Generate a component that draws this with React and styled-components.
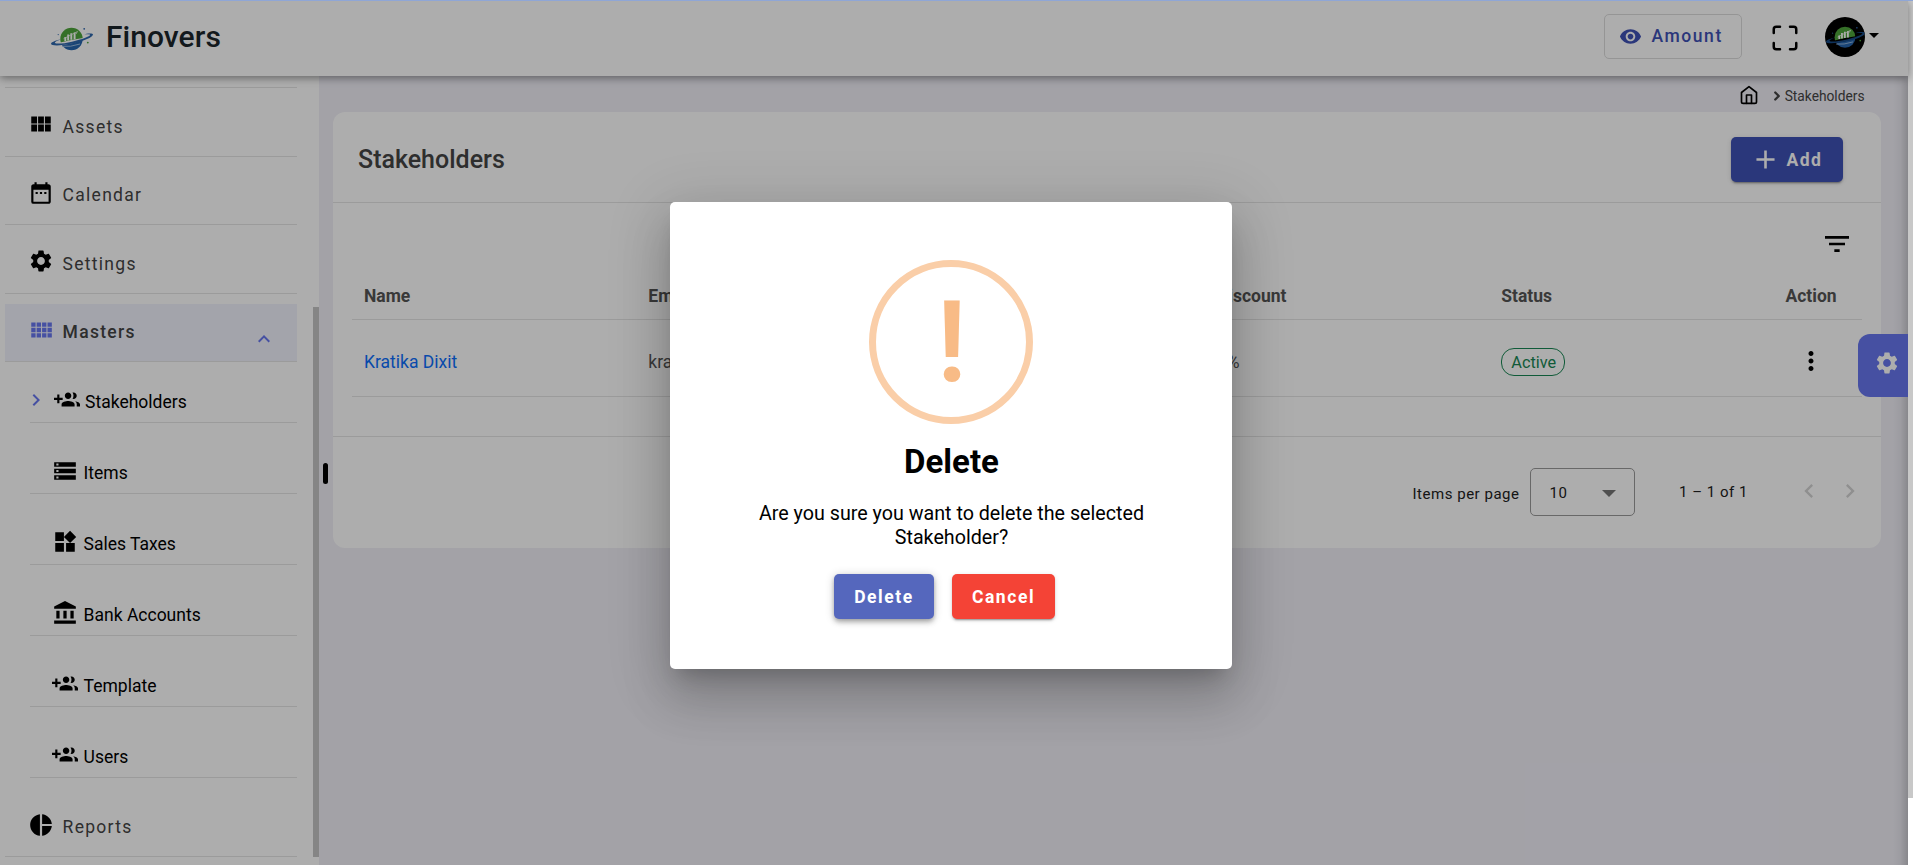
import React from "react";
import styled, { createGlobalStyle, css } from "styled-components";
import {
  MdViewModule,
  MdDateRange,
  MdSettings,
  MdExpandLess,
  MdChevronRight,
  MdChevronLeft,
  MdStorage,
  MdWidgets,
  MdAccountBalance,
  MdPieChart,
  MdVisibility,
  MdAdd,
  MdFilterList,
  MdMoreVert,
} from "react-icons/md";
import { FiHome, FiMaximize, FiChevronRight } from "react-icons/fi";

const color = {
  primary: "#3f51b5",
  accent: "#6777ef",
  line: "#e5e5e5",
  text: "#444",
  page: "#f0eff7",
};

const GlobalStyle = createGlobalStyle`
  *, *::before, *::after { box-sizing: border-box; }
  html, body { margin: 0; height: 100%; overflow: hidden; }
  body {
    font-family: Roboto, "Liberation Sans", sans-serif;
    font-size: 17.5px;
    color: ${color.text};
    background: #fff;
  }
  svg { display: block; flex: none; }
`;

const Page = styled.div`
  height: 865px;
  width: 1913px;
  display: flex;
  flex-direction: column;
  border-top: 1px solid #8fa6d6;
  position: relative;
  overflow: hidden;
`;

const Columns = styled.div`
  flex: 1;
  min-height: 0;
  display: flex;
`;

const Shell = styled.div`
  flex: 1;
  min-width: 0;
  display: flex;
  flex-direction: column;
  position: relative;
`;

const ScrollTrack = styled.div`
  width: 5px;
  background: #fff;
`;

const ScrollThumb = styled.div`
  height: 797px;
  background: #c8c8c8;
`;

/* ---------- top bar ---------- */

const TopBar = styled.header`
  height: 75px;
  flex: none;
  display: flex;
  align-items: center;
  padding: 0 29px 4px 50px;
  background: #fff;
  position: relative;
  z-index: 2;
  box-shadow: 0 2px 8px rgba(0, 0, 0, 0.42);
`;

const Brand = styled.div`
  flex: 1;
  display: flex;
  align-items: center;
  gap: 12px;
  color: #1b262c;
  font-size: 30px;
  font-weight: 500;
  letter-spacing: 0.05px;
  line-height: 40px;

  svg {
    margin-top: 5px;
  }
`;

const AmountButton = styled.button`
  height: 45px;
  width: 138px;
  display: flex;
  align-items: center;
  gap: 9.5px;
  padding: 0 0 1px 14px;
  border: 1px solid #dcdcdc;
  border-radius: 5px;
  background: transparent;
  color: ${color.primary};
  font: 500 17.5px Roboto, sans-serif;
  letter-spacing: 1.56px;
`;

const FullscreenIcon = styled(FiMaximize)`
  width: 30px;
  height: 30px;
  margin: 3px 25px 0 28px;
  color: #000;
`;

const Avatar = styled.div`
  width: 40px;
  height: 40px;
  margin-top: 1px;
  border-radius: 50%;
  background: #000;
  overflow: hidden;
  display: flex;
  align-items: center;
  justify-content: center;
`;

const Caret = styled.span`
  margin: -3px 0 0 4px;
  border: 5px solid transparent;
  border-top-color: #000;
  border-bottom: 0;
`;

/* ---------- sidebar ---------- */

const Sidebar = styled.nav`
  width: 319px;
  flex: none;
  display: flex;
  background: #fff;
`;

const Menu = styled.div`
  width: 292px;
  margin: 0 16px 0 5px;
`;

const MenuTopRule = styled.div`
  height: 12px;
  border-bottom: 1px solid ${color.line};
`;

const MenuThumb = styled.div`
  width: 6px;
  height: 550px;
  margin-top: 231px;
  background: #c5c5c5;
`;

const MenuItem = styled.a`
  display: flex;
  align-items: center;
  height: 58.5px;
  margin-top: ${(p) => (p.$gap ? p.$gap : 10)}px;
  padding: 0 21px 0 22.6px;
  border-bottom: 1px solid ${color.line};
  letter-spacing: 1.28px;

  > svg:first-child {
    width: 26px;
    height: 26px;
    margin-bottom: 5px;
    color: #000;
  }

  ${(p) =>
    p.$open &&
    css`
      background: #f0f2fd;
      font-weight: 500;

      > svg {
        color: ${color.accent};
      }
      > svg:first-child {
        color: ${color.accent};
      }
    `}
`;

const MenuLabel = styled.span`
  flex: 1;
  margin-left: 9px;
`;

const Collapse = styled(MdExpandLess)`
  width: 24px;
  height: 24px;
  margin-top: 13px;
`;

const SubItem = styled.a`
  display: flex;
  align-items: center;
  height: ${(p) => (p.$active ? 61 : 71)}px;
  margin-left: 25px;
  padding-top: ${(p) => (p.$active ? 20 : 30)}px;
  border-bottom: 1px solid ${color.line};
  color: #000;

  > svg {
    width: 26px;
    height: 26px;
    margin: 0 5.6px 4px 0;
  }
`;

const Lead = styled.span`
  flex: none;
  width: ${(p) => (p.$active ? 23.5 : 22)}px;

  svg {
    width: 24px;
    height: 24px;
    margin: 0 0 4px -6.5px;
    color: ${color.accent};
  }
`;

/* ---------- content ---------- */

const Content = styled.main`
  flex: 1;
  min-width: 0;
  padding: 0 27px 0 14px;
  background: ${color.page};
  position: relative;
`;

const Crumbs = styled.div`
  height: 36px;
  display: flex;
  align-items: center;
  justify-content: flex-end;
  padding: 4px 16.5px 0 0;
  font-size: 13.75px;

  svg:first-child {
    width: 20px;
    height: 20px;
    margin: 0 10.6px 2px 0;
    color: #000;
  }
  svg + svg {
    width: 14px;
    height: 14px;
    margin-right: 1px;
    stroke-width: 4;
  }
`;

const Card = styled.section`
  height: 436px;
  border-radius: 12px;
  background: #fff;
`;

const CardHead = styled.div`
  height: 91px;
  display: flex;
  align-items: center;
  justify-content: space-between;
  padding: 5px 38px 0 25px;
  border-bottom: 1px solid ${color.line};
`;

const CardTitle = styled.h1`
  margin: 0;
  font-size: 25px;
  font-weight: 500;
`;

const AddButton = styled.button`
  width: 112px;
  height: 45px;
  display: flex;
  align-items: center;
  gap: 5.5px;
  padding: 0 0 0 19px;
  border: 0;
  border-radius: 5px;
  background: ${color.primary};
  color: #fff;
  font: 700 17.5px Roboto, sans-serif;
  letter-spacing: 1.5px;
  box-shadow: 0 3px 1px -2px rgba(0, 0, 0, 0.2), 0 2px 2px rgba(0, 0, 0, 0.14),
    0 1px 5px rgba(0, 0, 0, 0.12);
`;

const Tools = styled.div`
  height: 70px;
  display: flex;
  justify-content: flex-end;
  padding: 25px 28px 0 0;
  color: #000;
`;

const Grid = styled.div`
  margin: 0 19px;
`;

const Row = styled.div`
  display: grid;
  grid-template-columns: repeat(5, 284.3px) 1fr;
  align-items: center;
  height: ${(p) => (p.$head ? 47 : 77)}px;
  padding: ${(p) => (p.$head ? 0 : 7)}px 0 0 12px;
  border-bottom: 1px solid ${color.line};
  font-weight: ${(p) => (p.$head ? 700 : 400)};
  color: #555;
`;

const PersonLink = styled.a`
  color: #0d6efd;
`;

const Badge = styled.span`
  display: inline-flex;
  align-items: center;
  justify-content: center;
  width: 64px;
  height: 28px;
  padding: 1px 0 0 1px;
  border: 1.25px solid #198754;
  border-radius: 13px;
  color: #198754;
  font-size: 16.25px;
`;

const RowMenu = styled(MdMoreVert)`
  width: 30px;
  height: 30px;
  margin: 0 0 2px 11px;
  color: #000;
`;

const Pager = styled.div`
  height: 112px;
  margin-top: 39px;
  display: flex;
  align-items: center;
  justify-content: flex-end;
  padding: 0 17px 1.5px 0;
  border-top: 1px solid ${color.line};
  color: #212121;
  font-size: 15px;
  letter-spacing: 0.52px;

  > svg {
    width: 28px;
    height: 28px;
    margin-bottom: 1px;
    color: #d3d3d3;
  }
  > svg + svg {
    margin-left: 13px;
  }
`;

const PagerLabel = styled.span`
  margin: 4px 10px 0 0;
`;

const PageSize = styled.div`
  width: 105px;
  height: 48px;
  display: flex;
  align-items: center;
  justify-content: space-between;
  margin-right: 44.5px;
  padding: 3px 18px 0 19px;
  border: 1px solid #9a9a9a;
  border-radius: 5px;
`;

const Triangle = styled.span`
  border: 7px solid transparent;
  border-top-color: #757575;
  border-bottom: 0;
`;

const PageRange = styled.span`
  margin-right: 47px;
`;

const EdgeShade = styled.div`
  position: absolute;
  top: 75px;
  right: 0;
  bottom: 0;
  width: 15px;
  background: linear-gradient(to right, rgba(0, 0, 0, 0), rgba(0, 0, 0, 0.04) 50%, rgba(0, 0, 0, 0.16));
`;

const Grip = styled.span`
  position: absolute;
  left: 4px;
  top: 387px;
  width: 5px;
  height: 21px;
  border-radius: 3px;
  background: #000;
`;

const SettingsTab = styled.button`
  position: absolute;
  right: 0;
  top: 333px;
  width: 50px;
  height: 63px;
  padding: 0 0 6px 16px;
  border: 0;
  border-radius: 12px 0 0 12px;
  background: ${color.accent};
  color: #fff;
`;

/* ---------- dialog ---------- */

const Backdrop = styled.div`
  position: absolute;
  inset: 0;
  z-index: 5;
  display: flex;
  align-items: center;
  justify-content: center;
  padding: 5px 6px 0 0;
  background: rgba(0, 0, 0, 0.32);
`;

const Dialog = styled.div`
  width: 562px;
  height: 467px;
  display: flex;
  flex-direction: column;
  align-items: center;
  padding-top: 58px;
  border-radius: 5px;
  background: #fff;
  color: #000;
  text-align: center;
  box-shadow: 0 14px 19px -9px rgba(0, 0, 0, 0.2), 0 30px 48px 4px rgba(0, 0, 0, 0.14),
    0 11px 58px 10px rgba(0, 0, 0, 0.12);
`;

const WarningMark = styled.div`
  width: 164px;
  height: 164px;
  flex: none;
  display: flex;
  align-items: center;
  justify-content: center;
  padding: 2px 0 0 1px;
  border: 7px solid #facea8;
  border-radius: 50%;
  color: #f8bb86;
  font-size: 113px;
  font-weight: 600;
  line-height: 150px;
`;

const DialogTitle = styled.h2`
  margin: 18px 0 0 1px;
  font-size: 33px;
  font-weight: 700;
  line-height: 40px;
`;

const DialogText = styled.p`
  width: 420px;
  margin: 20px 0 0 1px;
  font-size: 19.69px;
  line-height: 24px;
`;

const Actions = styled.div`
  display: flex;
  gap: 18px;
  margin: 24px 13px 0 0;
`;

const ActionButton = styled.button`
  width: ${(p) => (p.$danger ? 103 : 100)}px;
  height: 45px;
  padding: 0;
  border: 0;
  border-radius: 5px;
  background: ${(p) => (p.$danger ? "#f44336" : "#5567bd")};
  color: #fff;
  font: 700 17.5px Roboto, sans-serif;
  letter-spacing: 1.56px;
  box-shadow: ${(p) =>
    p.$danger
      ? "0 3px 1px -2px rgba(0,0,0,.2), 0 2px 2px rgba(0,0,0,.14), 0 1px 5px rgba(0,0,0,.12)"
      : "0 2px 4px -1px rgba(0,0,0,.2), 0 4px 5px rgba(0,0,0,.14), 0 1px 10px rgba(0,0,0,.2)"};
`;

function GroupAddIcon() {
  return (
    <svg viewBox="0 0 24 24" fill="currentColor">
      <path d="M8 10H5V7H3v3H0v2h3v3h2v-3h3v-2zm10 1c1.66 0 2.99-1.34 2.99-3S19.66 5 18 5c-.32 0-.63.05-.91.14.57.81.9 1.79.9 2.86s-.34 2.04-.9 2.86c.28.09.59.14.91.14zm-5 0c1.66 0 2.99-1.34 2.99-3S14.66 5 13 5c-1.66 0-3 1.34-3 3s1.34 3 3 3zm6.62 2.16c.83.73 1.38 1.66 1.38 2.84v2h3v-2c0-1.54-2.37-2.49-4.38-2.84zM13 13c-2 0-6 1-6 3v2h12v-2c0-2-4-3-6-3z" />
    </svg>
  );
}

function MastersIcon() {
  return (
    <svg viewBox="0 0 24 24" fill="currentColor">
      <path d="M3 9h4V5H3v4zm0 5h4v-4H3v4zm5 0h4v-4H8v4zm5 0h4v-4h-4v4zM8 9h4V5H8v4zm5-4v4h4V5h-4zm5 9h4v-4h-4v4zM3 19h4v-4H3v4zm5 0h4v-4H8v4zm5 0h4v-4h-4v4zm5 0h4v-4h-4v4zm0-14v4h4V5h-4z" />
    </svg>
  );
}

function PlanetLogo({ width, height, ringColor = "#2f67ad", id }) {
  return (
    <svg width={width} height={height} viewBox="0 0 44 24">
      <defs>
        <clipPath id={id + "-top"}>
          <path d="M8 0H36V10.5Q22 12.5 8 16Z" />
        </clipPath>
        <clipPath id={id + "-bottom"}>
          <path d="M8 18Q24 17.5 36 11V24H8Z" />
        </clipPath>
      </defs>
      <circle cx="21.5" cy="12" r="11.2" fill="#4fa63c" clipPath={`url(#${id}-top)`} />
      <circle cx="21.5" cy="12" r="11.2" fill="#2766ae" clipPath={`url(#${id}-bottom)`} />
      <path d="M15.3 14V10M18.2 13.4V7.4M21.3 12.8V6.2M24.6 12.2V5.4" stroke="#fff" strokeWidth="1.9" />
      <path d="M13.5 11.8L27.5 4.5L26 7" stroke="#e8f3e4" strokeWidth=".8" fill="none" />
      <path
        d="M32.5 7.6C38 6.2 43 6 43 7.6C42.8 10.2 34 14.3 22.5 16.6C10 19 1 19 1 16.8C1 15.3 5.5 13.5 11 12.3C6 14.2 4.5 15.2 5 15.9C6.5 17.3 14 16.5 22 14.7C32 12.4 40 9.3 40.2 8C40 7.1 36 7.3 32.5 7.6Z"
        fill={ringColor}
      />
      <path d="M12 19.3Q20 20.3 30 17" stroke="#a9c6e4" strokeWidth=".9" fill="none" />
      <circle cx="34.2" cy="1.8" r=".9" fill="#2f67ad" />
      <circle cx="8.2" cy="7.6" r=".6" fill="#2f67ad" />
      <circle cx="37.8" cy="15.6" r=".9" fill="#4fa63c" />
    </svg>
  );
}

const mainItems = [
  { label: "Assets", Icon: MdViewModule },
  { label: "Calendar", Icon: MdDateRange },
  { label: "Settings", Icon: MdSettings },
];

const masterItems = [
  { label: "Stakeholders", Icon: GroupAddIcon, active: true },
  { label: "Items", Icon: MdStorage },
  { label: "Sales Taxes", Icon: MdWidgets },
  { label: "Bank Accounts", Icon: MdAccountBalance },
  { label: "Template", Icon: GroupAddIcon },
  { label: "Users", Icon: GroupAddIcon },
];

const headings = ["Name", "Email", "", "Discount", "Status", "Action"];

export default function App() {
  return (
    <>
      <GlobalStyle />
      <Page>
        <Columns>
          <Shell>
            <TopBar>
              <Brand>
                <PlanetLogo id="brand" width={44} height={24} />
                Finovers
              </Brand>
              <AmountButton>
                <MdVisibility size={23} />
                Amount
              </AmountButton>
              <FullscreenIcon />
              <Avatar>
                <PlanetLogo id="avatar" width={41} height={22.5} ringColor="#174a86" />
              </Avatar>
              <Caret />
            </TopBar>

            <Columns>
              <Sidebar>
                <Menu>
                  <MenuTopRule />
                  {mainItems.map(({ label, Icon }) => (
                    <MenuItem key={label}>
                      <Icon />
                      <MenuLabel>{label}</MenuLabel>
                    </MenuItem>
                  ))}
                  <MenuItem $open>
                    <MastersIcon />
                    <MenuLabel>Masters</MenuLabel>
                    <Collapse />
                  </MenuItem>
                  {masterItems.map(({ label, Icon, active }) => (
                    <SubItem key={label} $active={active}>
                      <Lead $active={active}>{active && <MdChevronRight />}</Lead>
                      <Icon />
                      {label}
                    </SubItem>
                  ))}
                  <MenuItem $gap={20.5}>
                    <MdPieChart />
                    <MenuLabel>Reports</MenuLabel>
                  </MenuItem>
                </Menu>
                <MenuThumb />
              </Sidebar>

              <Content>
                <Crumbs>
                  <FiHome />
                  <FiChevronRight />
                  Stakeholders
                </Crumbs>
                <Card>
                  <CardHead>
                    <CardTitle>Stakeholders</CardTitle>
                    <AddButton>
                      <MdAdd size={31} />
                      Add
                    </AddButton>
                  </CardHead>
                  <Tools>
                    <MdFilterList size={32} />
                  </Tools>
                  <Grid>
                    <Row $head>
                      {headings.map((h, i) => (
                        <span key={i}>{h}</span>
                      ))}
                    </Row>
                    <Row>
                      <PersonLink>Kratika Dixit</PersonLink>
                      <span>kratika</span>
                      <span />
                      <span>0%</span>
                      <span>
                        <Badge>Active</Badge>
                      </span>
                      <RowMenu />
                    </Row>
                  </Grid>
                  <Pager>
                    <PagerLabel>Items per page</PagerLabel>
                    <PageSize>
                      10
                      <Triangle />
                    </PageSize>
                    <PageRange>1 – 1 of 1</PageRange>
                    <MdChevronLeft />
                    <MdChevronRight />
                  </Pager>
                </Card>
                <Grip />
              </Content>
            </Columns>

            <EdgeShade />
            <SettingsTab>
              <MdSettings size={26} />
            </SettingsTab>

            <Backdrop>
              <Dialog>
                <WarningMark>!</WarningMark>
                <DialogTitle>Delete</DialogTitle>
                <DialogText>Are you sure you want to delete the selected Stakeholder?</DialogText>
                <Actions>
                  <ActionButton>Delete</ActionButton>
                  <ActionButton $danger>Cancel</ActionButton>
                </Actions>
              </Dialog>
            </Backdrop>
          </Shell>
          <ScrollTrack>
            <ScrollThumb />
          </ScrollTrack>
        </Columns>
      </Page>
    </>
  );
}
